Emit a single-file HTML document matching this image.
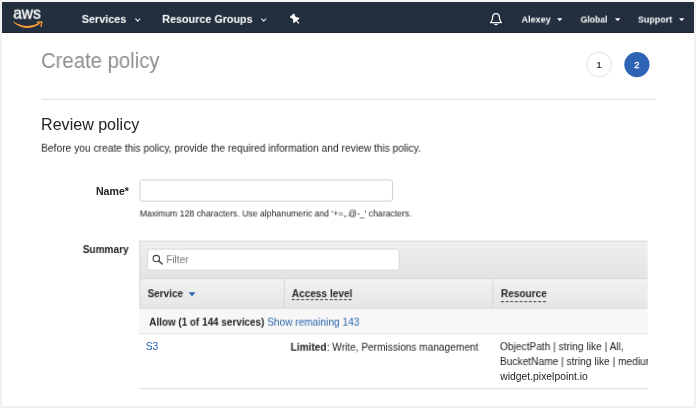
<!DOCTYPE html>
<html><head><meta charset="utf-8">
<style>
*{box-sizing:border-box;margin:0;padding:0}
html,body{width:696px;height:408px;overflow:hidden;background:#f1f1f1}
body:before{content:'';position:absolute;left:2px;top:0;width:692px;height:2px;background:#f5f5f5}
body{font-family:"Liberation Sans",sans-serif;color:#222;position:relative}
#page{position:absolute;left:2px;top:2px;width:692px;height:404.3px;background:#fff;overflow:hidden}
#nav{position:absolute;left:0;top:0;width:692px;height:31px;background:#232f3e;border-bottom:1px solid #1b2532}
.abs{position:absolute;white-space:nowrap}
.t{position:absolute;white-space:nowrap;transform-origin:0 0;will-change:transform}
</style></head><body>
<div id="page">
<div id="nav"></div>
<div id="aws" class="t" style="left:11px;top:0px;font-size:16.4px;line-height:21.3px;font-weight:normal;color:#fff;transform:translate(0.22px,0.67px) scaleX(0.9443)"><span style="-webkit-text-stroke:0.35px #fff">aws</span></div>
<svg class="abs" style="left:0;top:0" width="60" height="31" viewBox="2 1.65 60 31"><path d="M13 21.6 Q26 32.9 40 23.4 L39.6 22.5 Q26 29.3 13.4 21.1 Z" fill="#f79b34"/><path d="M37.2 21.9 L42 21.6 L40.9 26" fill="none" stroke="#f79b34" stroke-width="1.3" stroke-linejoin="round" stroke-linecap="round"/></svg>
<div id="services" class="t" style="left:79px;top:9px;font-size:11.3px;line-height:14.7px;font-weight:bold;color:#fff;transform:translate(0.72px,0.83px) scaleX(0.9577)">Services</div>
<svg class="abs" style="left:133.2px;top:16.2px" width="5.6" height="4" viewBox="0 0 5.6 4"><path d="M0.4 0.5 L2.8 3.1 L5.2 0.5" fill="none" stroke="#e6e8ea" stroke-width="1.1"/></svg>
<div id="rg" class="t" style="left:160px;top:9px;font-size:11.3px;line-height:14.7px;font-weight:bold;color:#fff;transform:translate(0.20px,0.83px) scaleX(0.9537)">Resource Groups</div>
<svg class="abs" style="left:259.2px;top:16.2px" width="5.6" height="4" viewBox="0 0 5.6 4"><path d="M0.4 0.5 L2.8 3.1 L5.2 0.5" fill="none" stroke="#e6e8ea" stroke-width="1.1"/></svg>
<svg class="abs" style="left:286.9px;top:11.2px" width="13" height="13" viewBox="0 0 12 12"><g transform="rotate(-40 6 6)"><path d="M3.5 1.4 Q3.5 0.8 4.1 0.8 H7.9 Q8.5 0.8 8.5 1.4 V2 Q8.5 2.6 7.8 2.7 V4.9 Q9.5 5.8 9.5 7.6 H2.5 Q2.5 5.8 4.2 4.9 V2.7 Q3.5 2.6 3.5 2 Z" fill="#fff"/><path d="M6 7.4 V10.4" stroke="#fff" stroke-width="1.1" stroke-linecap="round"/></g></svg>
<svg class="abs" style="left:487.4px;top:9.5px" width="14" height="15" viewBox="0 0 14 15"><path d="M7 1.6 C4.6 1.6 3.6 3.4 3.6 5.6 C3.6 8.4 2.6 9.6 1.6 10.6 H12.4 C11.4 9.6 10.4 8.4 10.4 5.6 C10.4 3.4 9.4 1.6 7 1.6 Z" fill="none" stroke="#fff" stroke-width="1.2" stroke-linejoin="round"/><path d="M5.6 12 C6 13 8 13 8.4 12" fill="none" stroke="#fff" stroke-width="1.2"/></svg>
<div id="alexey" class="t" style="left:519px;top:11px;font-size:9.8px;line-height:12.7px;font-weight:bold;color:#fff;transform:translate(0.54px,0.55px) scaleX(0.9230)">Alexey</div>
<svg class="abs" style="left:555px;top:15.8px" width="5.4" height="3.4" viewBox="0 0 5.4 3.4"><path d="M0 0.2 H5.4 L2.7 3.2 Z" fill="#fff"/></svg>
<div id="global" class="t" style="left:578px;top:11px;font-size:9.8px;line-height:12.7px;font-weight:bold;color:#fff;transform:translate(0.66px,0.55px) scaleX(0.8787)">Global</div>
<svg class="abs" style="left:612.8px;top:15.8px" width="5.4" height="3.4" viewBox="0 0 5.4 3.4"><path d="M0 0.2 H5.4 L2.7 3.2 Z" fill="#fff"/></svg>
<div id="support" class="t" style="left:635px;top:11px;font-size:9.8px;line-height:12.7px;font-weight:bold;color:#fff;transform:translate(0.95px,0.55px) scaleX(0.9097)">Support</div>
<svg class="abs" style="left:677.3px;top:15.8px" width="5.4" height="3.4" viewBox="0 0 5.4 3.4"><path d="M0 0.2 H5.4 L2.7 3.2 Z" fill="#fff"/></svg>

<div id="create" class="t" style="left:39px;top:44px;font-size:21.2px;line-height:27.6px;font-weight:normal;color:#909090;transform:translate(0.01px,0.95px) scaleX(0.9582)">Create policy</div>
<svg class="abs" style="left:580px;top:46px;will-change:transform" width="76" height="36" viewBox="582 48 76 36"><circle cx="599.15" cy="64.5" r="12.3" fill="#fff" stroke="#e0e0e0" stroke-width="1"/><circle cx="636.9" cy="64.55" r="12.6" fill="#2d63b4"/><text x="599.1" y="68.2" font-family="Liberation Sans, sans-serif" font-size="9.4" fill="#222" stroke="#222" stroke-width="0.2" text-anchor="middle">1</text><text x="636.9" y="68.2" font-family="Liberation Sans, sans-serif" font-size="9.4" fill="#fff" stroke="#fff" stroke-width="0.3" text-anchor="middle">2</text></svg>

<div id="review" class="t" style="left:39px;top:112px;font-size:15.9px;line-height:20.7px;font-weight:normal;color:#222;transform:translate(0.07px,0.84px) scaleX(1.0107)">Review policy</div>
<div id="sub" class="t" style="left:39px;top:139px;font-size:10.3px;line-height:13.4px;font-weight:normal;color:#222;transform:translate(0.17px,0.73px) scaleX(0.9926)">Before you create this policy, provide the required information and review this policy.</div>
<div id="name" class="t" style="left:93px;top:182px;font-size:10.3px;line-height:13.4px;font-weight:bold;color:#222;transform:translate(0.97px,0.73px) scaleX(1.0280)">Name*</div>
<div id="help" class="t" style="left:137px;top:206px;font-size:8.8px;line-height:11.4px;font-weight:normal;color:#222;transform:translate(0.76px,0.45px) scaleX(0.9874)">Maximum 128 characters. Use alphanumeric and '+=,.@-_' characters.</div>
<div id="summary" class="t" style="left:80px;top:241px;font-size:10.3px;line-height:13.4px;font-weight:bold;color:#222;transform:translate(0.77px,0.03px) scaleX(0.9746)">Summary</div>

<svg class="abs" style="left:-2px;top:-2px" width="696" height="408" viewBox="0 0 696 408">
<defs>
<linearGradient id="g1" x1="0" y1="0" x2="0" y2="1"><stop offset="0" stop-color="#efefef"/><stop offset="1" stop-color="#e4e4e4"/></linearGradient>
<linearGradient id="g2" x1="0" y1="0" x2="0" y2="1"><stop offset="0" stop-color="#f2f2f2"/><stop offset="1" stop-color="#e5e5e5"/></linearGradient>
<clipPath id="cp"><rect x="130" y="230" width="517.7" height="178"/></clipPath>
</defs>
<rect x="41.5" y="98.7" width="614.2" height="1" fill="#dedede"/>
<rect x="140" y="179.9" width="252.6" height="21.3" rx="2.8" fill="#fff" stroke="#cfcfcf" stroke-width="1"/>
<g clip-path="url(#cp)">
<rect x="139.4" y="240.7" width="520" height="37.4" fill="url(#g1)"/>
<rect x="139.4" y="240.7" width="520" height="1" fill="#d9d9d9"/>
<rect x="139.4" y="278.1" width="520" height="30.7" fill="url(#g2)"/>
<rect x="139.4" y="278.1" width="520" height="1" fill="#d8d8d8"/>
<rect x="139.4" y="307.8" width="520" height="1" fill="#d6d6d6"/>
<rect x="139.4" y="240.7" width="1" height="68.1" fill="#d9d9d9"/>
<rect x="283.8" y="279.1" width="1" height="28.7" fill="#d6d6d6"/>
<rect x="492.4" y="279.1" width="1" height="28.7" fill="#d6d6d6"/>
<rect x="139.4" y="308.8" width="520" height="25.1" fill="#f7f7f7"/>
<rect x="139.4" y="333.4" width="520" height="1" fill="#e0e0e0"/>
<rect x="139.4" y="388.1" width="520" height="1" fill="#dcdcdc"/>
<rect x="147.6" y="249.1" width="251.6" height="21" rx="2.8" fill="#fff" stroke="#d8d8d8" stroke-width="1"/>
<circle cx="156.3" cy="258.5" r="3.2" fill="none" stroke="#4a4a4a" stroke-width="1.15"/><path d="M158.7 260.9 L162.3 264" stroke="#4a4a4a" stroke-width="1.4" stroke-linecap="round"/>
<path d="M188.6 292.2 H195.5 L192.05 296.6 Z" fill="#2b6cb5"/>
</g>
</svg>
<div id="filter" class="t" style="left:164px;top:251px;font-size:10.3px;line-height:13.4px;font-weight:normal;color:#777;transform:translate(0.24px,0.13px) scaleX(0.9718)">Filter</div>
<div id="service" class="t" style="left:145px;top:285px;font-size:10.3px;line-height:13.4px;font-weight:bold;color:#262626;transform:translate(0.64px,0.13px) scaleX(0.9640)">Service</div>
<div id="access" class="t" style="left:289px;top:285px;font-size:10.3px;line-height:13.4px;font-weight:bold;color:#262626;transform:translate(0.77px,0.13px) scaleX(0.9789)"><span style="text-decoration:underline dashed #333;text-decoration-thickness:0.7px;text-underline-offset:1.9px">Access level</span></div>
<div id="resource" class="t" style="left:498px;top:285px;font-size:10.3px;line-height:13.4px;font-weight:bold;color:#262626;transform:translate(0.88px,0.13px) scaleX(0.9768)"><span style="text-decoration:underline dashed #333;text-decoration-thickness:0.7px;text-underline-offset:3.5px">Resource</span></div>
<div id="allow" class="t" style="left:147px;top:313px;font-size:10.3px;line-height:13.4px;font-weight:bold;color:#222;transform:translate(0.20px,0.63px) scaleX(0.9620)">Allow (1 of 144 services)</div>
<div id="show" class="t" style="left:265px;top:313px;font-size:10.3px;line-height:13.4px;font-weight:normal;color:#2a66ad;transform:translate(0.21px,0.63px) scaleX(0.9811)">Show remaining 143</div>
<div id="s3" class="t" style="left:143px;top:338px;font-size:10.3px;line-height:13.4px;font-weight:normal;color:#2a66ad;transform:translate(0.65px,0.43px) scaleX(1.0138)">S3</div>
<div id="limited" class="t" style="left:288px;top:338px;font-size:10.3px;line-height:13.4px;font-weight:normal;color:#222;transform:translate(0.59px,0.73px) scaleX(0.9834)"><b>Limited</b>: Write, Permissions management</div>
<div class="abs" style="left:480px;top:330px;width:165.6px;height:70px;overflow:hidden"><div style="position:absolute;left:-480px;top:-330px">
<div id="obj1" class="t" style="left:497px;top:338px;font-size:10.3px;line-height:13.4px;font-weight:normal;color:#222;transform:translate(0.86px,0.13px) scaleX(0.9908)">ObjectPath | string like | All,</div>
<div id="obj2" class="t" style="left:497px;top:353px;font-size:10.3px;line-height:13.4px;font-weight:normal;color:#222;transform:translate(0.86px,0.03px) scaleX(0.9908)">BucketName | string like | medium</div>
<div id="obj3" class="t" style="left:498px;top:367px;font-size:10.3px;line-height:13.4px;font-weight:normal;color:#222;transform:translate(0.32px,0.73px) scaleX(1.0049)">widget.pixelpoint.io</div>
</div></div>
</div>
</body></html>
